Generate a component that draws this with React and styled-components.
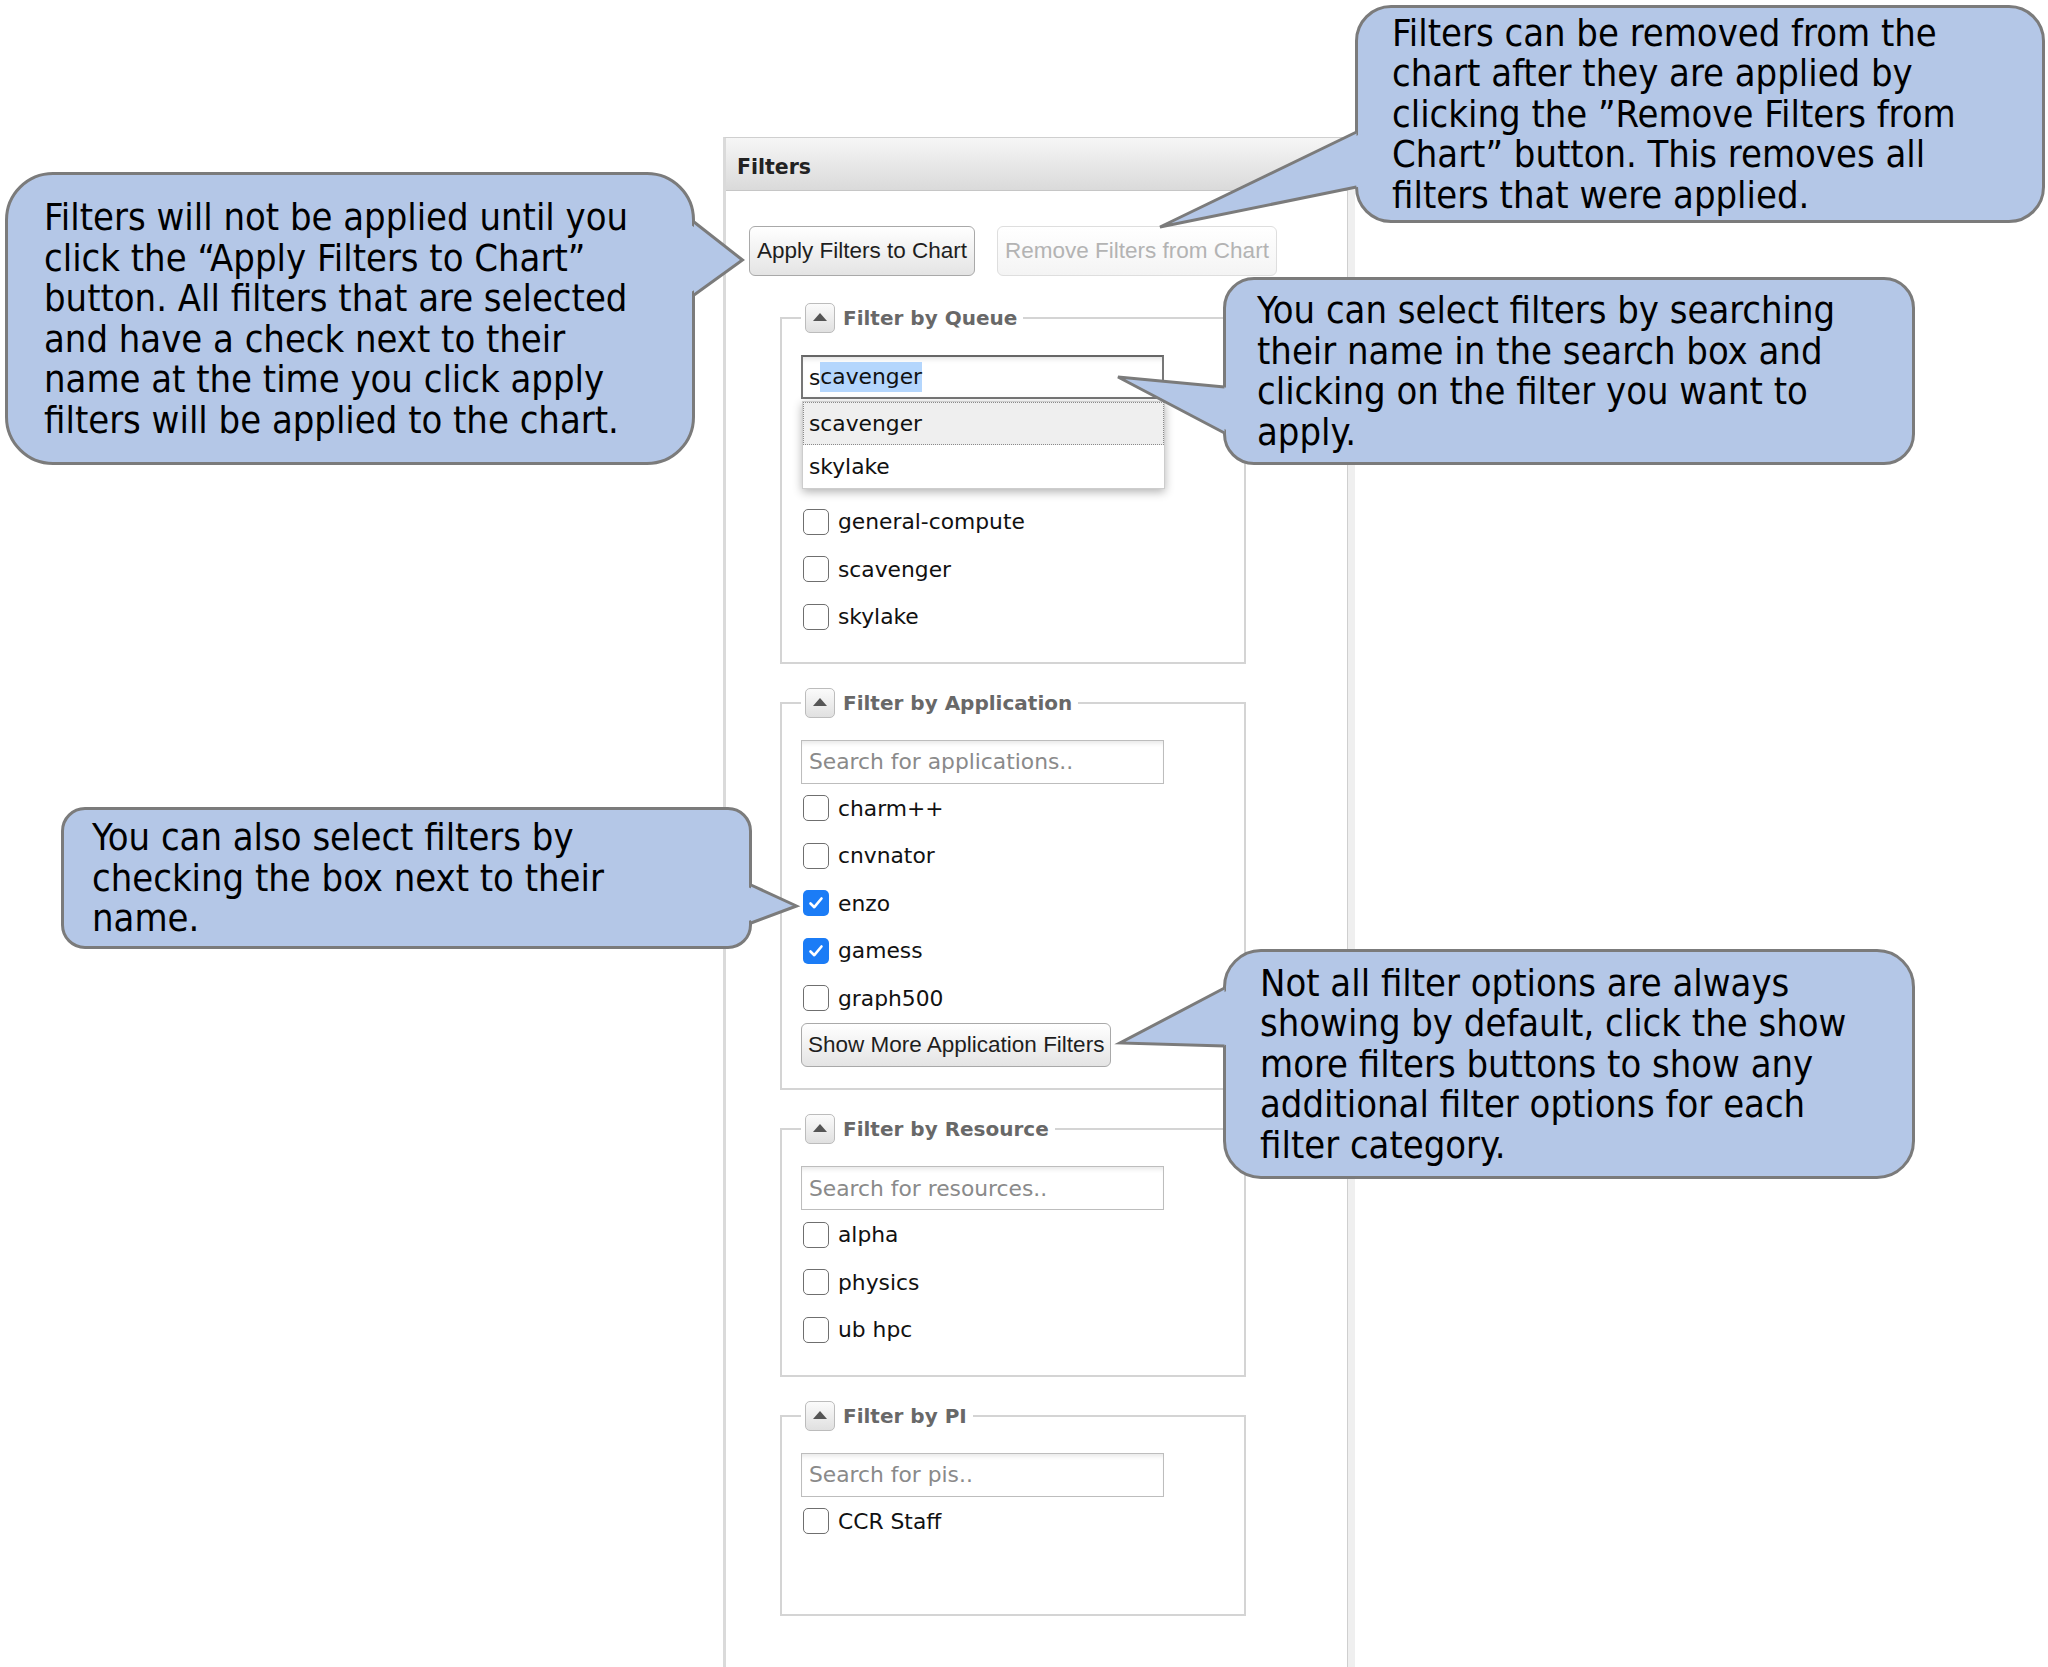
import React from "react";
import styled, { createGlobalStyle } from "styled-components";

const GlobalStyle = createGlobalStyle`
  html, body { margin: 0; padding: 0; background: #fff; }
  body { font-family: "DejaVu Sans", Verdana, sans-serif; }
`;

const Page = styled.div`
  position: relative;
  width: 2048px;
  height: 1667px;
  overflow: hidden;
  background: #fff;
  padding: 137px 0 0 723px;
  box-sizing: border-box;
`;

const Panel = styled.section`
  width: 625px;
  height: 1560px;
  box-sizing: border-box;
  border: 1px solid #cfcfcf;
  border-left: 3px solid #dadada;
  box-shadow: 7px 0 0 #efefef;
  background: #fff;
`;

const PanelHeader = styled.header`
  height: 53px;
  box-sizing: border-box;
  padding: 5px 0 0 11px;
  display: flex;
  align-items: center;
  background: linear-gradient(#f6f6f6, #dadada);
  border-bottom: 1px solid #c6c6c6;
  font: bold 20.5px "DejaVu Sans", sans-serif;
  color: #222;
`;

const PanelBody = styled.div`
  padding: 35px 0 40px 23px;
`;

const ButtonRow = styled.div`
  display: flex;
  gap: 22px;
`;

const Button = styled.button`
  height: ${(p) => (p.$small ? 44 : 50)}px;
  padding: 0 ${(p) => (p.$small ? 6 : 7)}px;
  box-sizing: border-box;
  font: 22.5px "Liberation Sans", Arial, sans-serif;
  color: ${(p) => (p.disabled ? "#b3b3b3" : "#1e1e1e")};
  background: ${(p) =>
    p.disabled
      ? "linear-gradient(#ffffff, #f4f4f4)"
      : "linear-gradient(#ffffff, #e4e4e4)"};
  border: 1px solid ${(p) => (p.disabled ? "#dedede" : "#a9a9a9")};
  border-radius: 6px;
  white-space: nowrap;
  margin-top: ${(p) => (p.$small ? 1 : 0)}px;
`;

const Group = styled.fieldset`
  width: 466px;
  box-sizing: border-box;
  margin: ${(p) => (p.$first ? 27 : 24)}px 0 0 31px;
  padding: 22px 19px ${(p) => p.$bottom}px 19px;
  border: 2px solid #d4d4d4;
  min-inline-size: auto;
`;

const Legend = styled.legend`
  padding: 0 6px 0 4px;
  height: 30px;
`;

const LegendInner = styled.span`
  display: inline-flex;
  align-items: center;
  gap: 8px;
  height: 30px;
  font: bold 20px "DejaVu Sans", sans-serif;
  color: #686868;
`;

const Toggle = styled.span`
  width: 30px;
  height: 30px;
  box-sizing: border-box;
  border: 1px solid #bcbcbc;
  border-radius: 5px;
  background: linear-gradient(#fbfbfb, #e0e0e0);
  display: flex;
  align-items: center;
  justify-content: center;

  &::after {
    content: "";
    width: 0;
    height: 0;
    border-left: 7px solid transparent;
    border-right: 7px solid transparent;
    border-bottom: 8px solid #555;
    margin-top: -2px;
  }
`;

const SearchInput = styled.input`
  display: block;
  width: 363px;
  height: 44px;
  box-sizing: border-box;
  padding: 0 7px;
  border: 1px solid #bdbdbd;
  box-shadow: inset 0 5px 5px -3px rgba(0, 0, 0, 0.1);
  font: 21.8px "DejaVu Sans", sans-serif;
  color: #111;
  outline: none;

  &::placeholder {
    color: #8a8a8a;
  }
`;

const FocusedBox = styled.div`
  width: 363px;
  height: 44px;
  box-sizing: border-box;
  padding: 0 6px;
  border: 2px solid #777;
  border-top-color: #666;
  box-shadow: inset 0 5px 5px -3px rgba(0, 0, 0, 0.12);
  display: flex;
  align-items: center;
  font: 21.8px "DejaVu Sans", sans-serif;
  color: #111;
`;

const Selected = styled.span`
  background: #b4d6fd;
  line-height: 30px;
`;

const Menu = styled.div`
  width: 361px;
  margin: 2px 0 0 1px;
  border: 1px solid #cdcdcd;
  background: #fff;
  box-shadow: 0 3px 9px rgba(0, 0, 0, 0.3);
`;

const MenuItem = styled.div`
  height: 43px;
  box-sizing: border-box;
  padding-left: 5px;
  display: flex;
  align-items: center;
  font: 21.8px "DejaVu Sans", sans-serif;
  color: #111;
  background: ${(p) => (p.$active ? "#efefef" : "#fff")};
  border: 1px dotted ${(p) => (p.$active ? "#8a8a8a" : "transparent")};
`;

const List = styled.div`
  margin-top: ${(p) => p.$gap}px;
`;

const Row = styled.label`
  height: 47.5px;
  display: flex;
  align-items: center;
  gap: 9px;
  padding-left: 2px;
  font: 21.8px "DejaVu Sans", sans-serif;
  color: #111;
`;

const Box = styled.span`
  width: 26px;
  height: 26px;
  box-sizing: border-box;
  border-radius: 5px;
  border: ${(p) => (p.$checked ? "none" : "1.7px solid #6f6f6f")};
  background: ${(p) => (p.$checked ? "#1b7cf6" : "#fff")};
  display: flex;
  align-items: center;
  justify-content: center;
`;

const Bubble = styled.div`
  position: absolute;
  left: ${(p) => p.$x}px;
  top: ${(p) => p.$y}px;
  width: ${(p) => p.$w}px;
  height: ${(p) => p.$h}px;
  box-sizing: border-box;
  padding-left: ${(p) => p.$pad}px;
  border: 3px solid #7b7b7b;
  border-radius: ${(p) => p.$r}px;
  background: #b4c7e7;
  display: flex;
  flex-direction: column;
  justify-content: center;
  font-family: "DejaVu Sans Condensed", "DejaVu Sans", sans-serif;
  font-stretch: condensed;
  font-size: 37.8px;
  line-height: 40.5px;
  color: #000;
  white-space: nowrap;
`;

const Pointer = styled.svg`
  position: absolute;
  left: ${(p) => p.$x}px;
  top: ${(p) => p.$y}px;
  overflow: visible;
`;

const Check = () => (
  <svg width="18" height="18" viewBox="0 0 18 18">
    <path
      d="M3.5 9.5 L7.3 13.2 L14.5 4.5"
      fill="none"
      stroke="#fff"
      strokeWidth="2.6"
      strokeLinecap="round"
      strokeLinejoin="round"
    />
  </svg>
);

const Callout = ({ x, y, w, h, r, pad, side, base, tip, lines }) => {
  const bx = side === "left" ? x + 1.5 : x + w - 1.5;
  const inset = side === "left" ? 6 : -6;
  const minX = Math.min(bx, tip[0], bx + inset) - 4;
  const minY = Math.min(base[0], tip[1]) - 4;
  const maxX = Math.max(bx, tip[0], bx + inset) + 4;
  const maxY = Math.max(base[1], tip[1]) + 4;
  const P = (px, py) => `${px - minX},${py - minY}`;
  return (
    <>
      <Bubble $x={x} $y={y} $w={w} $h={h} $r={r} $pad={pad}>
        {lines.map((l, i) => (
          <div key={i}>{l}</div>
        ))}
      </Bubble>
      <Pointer
        $x={minX}
        $y={minY}
        width={maxX - minX}
        height={maxY - minY}
      >
        <polygon
          points={`${P(tip[0], tip[1])} ${P(bx + inset, base[0] + 1)} ${P(
            bx + inset,
            base[1] - 1
          )}`}
          fill="#b4c7e7"
        />
        <polygon
          points={`${P(tip[0], tip[1])} ${P(bx, base[0])} ${P(bx, base[1])}`}
          fill="#b4c7e7"
        />
        <polyline
          points={`${P(bx, base[0])} ${P(tip[0], tip[1])} ${P(bx, base[1])}`}
          fill="none"
          stroke="#7b7b7b"
          strokeWidth="3"
          strokeLinejoin="miter"
        />
      </Pointer>
    </>
  );
};

const callouts = [
  {
    x: 5, y: 172, w: 690, h: 293, r: 48, pad: 36, side: "right",
    base: [222, 295], tip: [742, 260],
    lines: [
      "Filters will not be applied until you",
      "click the “Apply Filters to Chart”",
      "button. All filters that are selected",
      "and have a check next to their",
      "name at the time you click apply",
      "filters will be applied to the chart.",
    ],
  },
  {
    x: 1355, y: 5, w: 690, h: 218, r: 36, pad: 34, side: "left",
    base: [132, 187], tip: [1160, 227],
    lines: [
      "Filters can be removed from the",
      "chart after they are applied by",
      "clicking the ”Remove Filters from",
      "Chart” button. This removes all",
      "filters that were applied.",
    ],
  },
  {
    x: 1223, y: 277, w: 692, h: 188, r: 31, pad: 31, side: "left",
    base: [387, 433], tip: [1118, 377],
    lines: [
      "You can select filters by searching",
      "their name in the search box and",
      "clicking on the filter you want to",
      "apply.",
    ],
  },
  {
    x: 61, y: 807, w: 691, h: 142, r: 24, pad: 28, side: "right",
    base: [885, 923], tip: [796, 906],
    lines: [
      "You can also select filters by",
      "checking the box next to their",
      "name.",
    ],
  },
  {
    x: 1223, y: 949, w: 692, h: 230, r: 38, pad: 34, side: "left",
    base: [988, 1046], tip: [1120, 1043],
    lines: [
      "Not all filter options are always",
      "showing by default, click the show",
      "more filters buttons to show any",
      "additional filter options for each",
      "filter category.",
    ],
  },
];

const Items = ({ items, gap }) => (
  <List $gap={gap}>
    {items.map((it) => (
      <Row key={it.name}>
        <Box $checked={it.checked}>{it.checked && <Check />}</Box>
        {it.name}
      </Row>
    ))}
  </List>
);

const GroupLegend = ({ title }) => (
  <Legend>
    <LegendInner>
      <Toggle />
      {title}
    </LegendInner>
  </Legend>
);

const App = () => {
  return (
    <Page>
      <GlobalStyle />
      <Panel>
        <PanelHeader>Filters</PanelHeader>
        <PanelBody>
          <ButtonRow>
            <Button>Apply Filters to Chart</Button>
            <Button disabled>Remove Filters from Chart</Button>
          </ButtonRow>

          <Group $first $bottom={21}>
            <GroupLegend title="Filter by Queue" />
            <FocusedBox>
              s<Selected>cavenger</Selected>
            </FocusedBox>
            <Menu>
              <MenuItem $active>scavenger</MenuItem>
              <MenuItem>skylake</MenuItem>
            </Menu>
            <Items
              gap={9}
              items={[
                { name: "general-compute" },
                { name: "scavenger" },
                { name: "skylake" },
              ]}
            />
          </Group>

          <Group $bottom={21}>
            <GroupLegend title="Filter by Application" />
            <SearchInput readOnly placeholder="Search for applications.." />
            <Items
              gap={1}
              items={[
                { name: "charm++" },
                { name: "cnvnator" },
                { name: "enzo", checked: true },
                { name: "gamess", checked: true },
                { name: "graph500" },
              ]}
            />
            <Button $small>Show More Application Filters</Button>
          </Group>

          <Group $bottom={21}>
            <GroupLegend title="Filter by Resource" />
            <SearchInput readOnly placeholder="Search for resources.." />
            <Items
              gap={1}
              items={[{ name: "alpha" }, { name: "physics" }, { name: "ub hpc" }]}
            />
          </Group>

          <Group $bottom={69}>
            <GroupLegend title="Filter by PI" />
            <SearchInput readOnly placeholder="Search for pis.." />
            <Items gap={1} items={[{ name: "CCR Staff" }]} />
          </Group>
        </PanelBody>
      </Panel>

      {callouts.map((c, i) => (
        <Callout key={i} {...c} />
      ))}
    </Page>
  );
};

export default App;
